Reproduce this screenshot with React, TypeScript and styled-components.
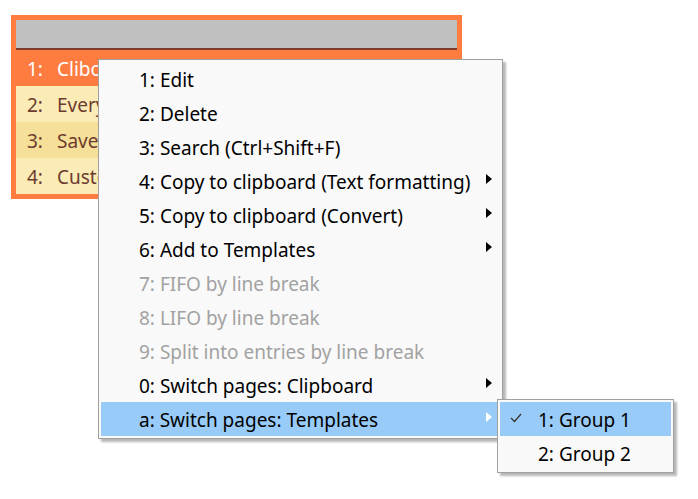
import React from "react";
import styled, { createGlobalStyle } from "styled-components";

const GlobalStyle = createGlobalStyle`
  html, body {
    margin: 0;
    padding: 0;
    background: #ffffff;
  }
  body {
    font-family: "Noto Sans", "Open Sans", sans-serif;
  }
`;

const Page = styled.div`
  position: relative;
  width: 698px;
  height: 499px;
  padding: 15px 0 0 11px;
  box-sizing: border-box;
  overflow: hidden;
`;

const Window = styled.div`
  width: 451px;
  box-sizing: border-box;
  border: 5px solid #ff7c40;
  background: #ff7c40;
`;

const TitleBar = styled.div`
  height: 28px;
  background: #c0c0c0;
  border-bottom: 2px solid #7c3b2c;
`;

const Row = styled.div<{ $bg: string; $fg: string }>`
  display: flex;
  align-items: center;
  height: 36px;
  padding: 2px 0 0 11px;
  box-sizing: border-box;
  background: ${(p) => p.$bg};
  color: ${(p) => p.$fg};
  font-size: 19px;
  white-space: nowrap;
`;

const RowNum = styled.span`
  width: 30px;
`;

const Menu = styled.div<{ $left: number; $top: number; $width: number }>`
  position: absolute;
  left: ${(p) => p.$left}px;
  top: ${(p) => p.$top}px;
  width: ${(p) => p.$width}px;
  box-sizing: border-box;
  padding: 2px;
  background: #f9f9f9;
  border: 1px solid #a0a0a0;
  box-shadow: 3px 3px 2px rgba(0, 0, 0, 0.28);
`;

const Item = styled.div<{ $active?: boolean; $disabled?: boolean; $indent: number }>`
  display: flex;
  align-items: center;
  height: 34px;
  padding: 2px 8px 0 ${(p) => p.$indent}px;
  box-sizing: border-box;
  background: ${(p) => (p.$active ? "#99cbf8" : "transparent")};
  color: ${(p) => (p.$disabled ? "#a2a2a2" : "#000000")};
  font-size: 19px;
  white-space: nowrap;
`;

const Label = styled.span`
  flex: 1;
`;

const Arrow = styled.span<{ $light?: boolean }>`
  width: 0;
  height: 0;
  margin-bottom: 7px;
  border-top: 5px solid transparent;
  border-bottom: 5px solid transparent;
  border-left: 6px solid ${(p) => (p.$light ? "#ffffff" : "#000000")};
`;

const CheckSlot = styled.span`
  display: flex;
  width: 38px;
  margin-left: -38px;
  padding: 0 0 5px 10px;
  box-sizing: border-box;
`;

type MenuEntry = { label: string; sub?: boolean; disabled?: boolean; active?: boolean };

const entries: MenuEntry[] = [
  { label: "1: Edit" },
  { label: "2: Delete" },
  { label: "3: Search (Ctrl+Shift+F)" },
  { label: "4: Copy to clipboard (Text formatting)", sub: true },
  { label: "5: Copy to clipboard (Convert)", sub: true },
  { label: "6: Add to Templates", sub: true },
  { label: "7: FIFO by line break", disabled: true },
  { label: "8: LIFO by line break", disabled: true },
  { label: "9: Split into entries by line break", disabled: true },
  { label: "0: Switch pages: Clipboard", sub: true },
  { label: "a: Switch pages: Templates", sub: true, active: true },
];

const rows = [
  { num: "1:", text: "Clibor", bg: "#ff7c40", fg: "#ffffff" },
  { num: "2:", text: "Everyday", bg: "#fbebb6", fg: "#6c3b2e" },
  { num: "3:", text: "Saved", bg: "#f6df98", fg: "#6c3b2e" },
  { num: "4:", text: "Custom", bg: "#fbebb6", fg: "#6c3b2e" },
];

export default function App() {
  return (
    <>
      <GlobalStyle />
      <Page>
        <Window>
          <TitleBar />
          {rows.map((r) => (
            <Row key={r.num} $bg={r.bg} $fg={r.fg}>
              <RowNum>{r.num}</RowNum>
              {r.text}
            </Row>
          ))}
        </Window>

        <Menu $left={98} $top={59} $width={405}>
          {entries.map((e) => (
            <Item key={e.label} $indent={38} $active={e.active} $disabled={e.disabled}>
              <Label>{e.label}</Label>
              {e.sub && <Arrow $light={e.active} />}
            </Item>
          ))}
        </Menu>

        <Menu $left={497} $top={399} $width={177}>
          <Item $indent={38} $active>
            <CheckSlot>
              <svg width="12" height="10" viewBox="0 0 12 10">
                <path d="M1 5 L4.5 8.5 L11 1" fill="none" stroke="#333" strokeWidth="1.2" />
              </svg>
            </CheckSlot>
            <Label>1: Group 1</Label>
          </Item>
          <Item $indent={38}>
            <Label>2: Group 2</Label>
          </Item>
        </Menu>
      </Page>
    </>
  );
}
